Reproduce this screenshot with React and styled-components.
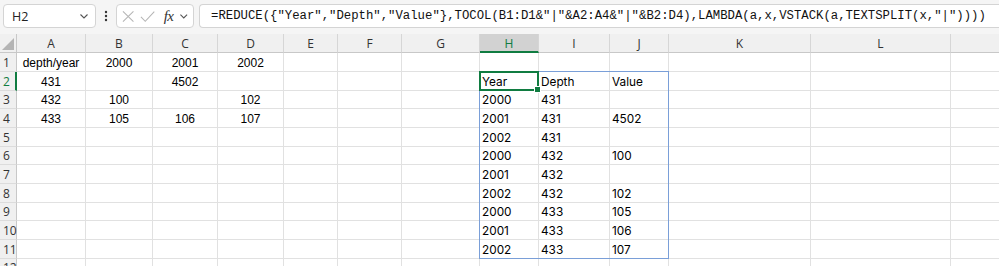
import React from "react";
import styled, { createGlobalStyle } from "styled-components";

const GlobalStyle = createGlobalStyle`
  * { box-sizing: border-box; }
  body {
    margin: 0;
    background: #ffffff;
    font-family: "Liberation Sans", Arial, sans-serif;
    overflow: hidden;
  }
`;

// last column is only partly in view, its letter falls outside the window
const COLS = [
  { id: "", w: 17 },
  { id: "A", w: 69 },
  { id: "B", w: 67 },
  { id: "C", w: 65 },
  { id: "D", w: 66 },
  { id: "E", w: 54 },
  { id: "F", w: 64 },
  { id: "G", w: 78 },
  { id: "H", w: 59 },
  { id: "I", w: 71 },
  { id: "J", w: 59 },
  { id: "K", w: 142 },
  { id: "L", w: 140 },
  { id: "M", w: 130, hidden: true },
];

const ROW_H = 18.67;
const HEAD_H = 19.33;

const source = {
  1: ["depth/year", "2000", "2001", "2002"],
  2: ["431", "", "4502", ""],
  3: ["432", "100", "", "102"],
  4: ["433", "105", "106", "107"],
};

const spill = [
  ["Year", "Depth", "Value"],
  ["2000", "431", ""],
  ["2001", "431", "4502"],
  ["2002", "431", ""],
  ["2000", "432", "100"],
  ["2001", "432", ""],
  ["2002", "432", "102"],
  ["2000", "433", "105"],
  ["2001", "433", "106"],
  ["2002", "433", "107"],
];

const Window = styled.div`
  width: 999px;
  height: 266px;
  display: flex;
  flex-direction: column;
  overflow: hidden;
`;

const Toolbar = styled.div`
  height: 34px;
  flex-shrink: 0;
  background: #f5f5f5;
  display: flex;
  align-items: flex-start;
  padding: 4px 0 0 3px;
`;

const Box = styled.div`
  height: 24px;
  background: #ffffff;
  border: 1px solid #d4d4d4;
  border-radius: 4px;
  display: flex;
  align-items: center;
`;

const NameBox = styled(Box)`
  width: 93px;
  padding: 0 6px 0 8px;
  justify-content: space-between;
  font-family: "Open Sans", "Liberation Sans", sans-serif;
  font-size: 12.5px;
  color: #222;
`;

const Dots = styled.div`
  width: 20px;
  height: 24px;
  display: flex;
  align-items: center;
  justify-content: center;
`;

const FxBox = styled(Box)`
  width: 78px;
  padding: 0 4px 0 5px;
  gap: 6px;
`;

const FxLabel = styled.span`
  font-family: "Liberation Serif", "Times New Roman", serif;
  font-style: italic;
  font-size: 15px;
  color: #333;
  margin-left: 2px;
  letter-spacing: -0.5px;
`;

const FormulaBox = styled(Box)`
  flex: 1;
  margin-left: 5px;
  border-right: none;
  border-radius: 4px 0 0 4px;
  padding-left: 11px;
  font-family: "Liberation Mono", "DejaVu Sans Mono", monospace;
  font-size: 12.3px;
  color: #111;
  white-space: nowrap;
  overflow: hidden;
`;

const Sheet = styled.div`
  position: relative;
  display: grid;
  grid-template-columns: ${COLS.map((c) => c.w + "px").join(" ")};
  grid-template-rows: ${HEAD_H}px;
  grid-auto-rows: ${ROW_H}px;
  flex: 1;
`;

const ColHead = styled.div`
  background: ${(p) => (p.$active ? "#d2d2d2" : "#f0f0f0")};
  border-right: 1px solid #d6d6d6;
  border-bottom: ${(p) => (p.$active ? "2px solid #107c41" : "1px solid #c8c8c8")};
  color: ${(p) => (p.$active ? "#107c41" : "#333")};
  font-family: "Open Sans", "Liberation Sans", sans-serif;
  font-size: 12px;
  display: flex;
  align-items: center;
  justify-content: center;
  padding-top: 1px;
`;

const Corner = styled.div`
  background: #f0f0f0;
  border-right: 1px solid #c8c8c8;
  border-bottom: 1px solid #c8c8c8;
  display: flex;
  align-items: flex-end;
  justify-content: flex-end;
  padding: 0 2px 2px 0;
`;

const RowHead = styled.div`
  background: #f0f0f0;
  border-right: ${(p) => (p.$active ? "2px solid #107c41" : "1px solid #c8c8c8")};
  border-bottom: 1px solid #dcdcdc;
  color: ${(p) => (p.$active ? "#107c41" : "#333")};
  font-family: "Open Sans", "Liberation Sans", sans-serif;
  font-size: 12px;
  display: flex;
  align-items: center;
  padding: 1px 0 0 3px;
`;

const Cell = styled.div`
  border-right: 1px solid #e1e1e1;
  border-bottom: 1px solid #e1e1e1;
  display: flex;
  align-items: center;
  justify-content: ${(p) => (p.$center ? "center" : "flex-start")};
  padding: 2px 2px 0 2px;
  font-family: ${(p) =>
    p.$modern ? '"Inter", "Noto Sans", sans-serif' : '"Liberation Sans", Arial, sans-serif'};
  font-size: ${(p) => (p.$modern ? "11.8px" : "12px")};
  color: #000;
  white-space: nowrap;
  overflow: hidden;
`;

const Range = styled.div`
  position: absolute;
  border: 1px solid #7a9fd8;
  pointer-events: none;
`;

const Selected = styled.div`
  position: absolute;
  border: 2px solid #107c41;
  pointer-events: none;
  &::after {
    content: "";
    position: absolute;
    right: -4px;
    bottom: -4px;
    width: 5px;
    height: 5px;
    background: #107c41;
    border: 1px solid #fff;
  }
`;

const Chevron = () => (
  <svg width="10" height="10" viewBox="0 0 10 10">
    <path d="M1.5 3.5 L5 7 L8.5 3.5" fill="none" stroke="#555" strokeWidth="1.1" />
  </svg>
);

const VDots = () => (
  <svg width="4" height="12" viewBox="0 0 4 12">
    <circle cx="2" cy="2" r="1.2" fill="#333" />
    <circle cx="2" cy="6" r="1.2" fill="#333" />
    <circle cx="2" cy="10" r="1.2" fill="#333" />
  </svg>
);

const Cross = () => (
  <svg width="13" height="13" viewBox="0 0 13 13">
    <path d="M1 1 L12 12 M12 1 L1 12" stroke="#b5b5b5" strokeWidth="1.1" fill="none" />
  </svg>
);

const Check = () => (
  <svg width="16" height="13" viewBox="0 0 16 13">
    <path d="M1 7 L5.5 11.5 L15 1.5" stroke="#b5b5b5" strokeWidth="1.1" fill="none" />
  </svg>
);

const CornerMark = () => (
  <svg width="12" height="12" viewBox="0 0 12 12">
    <path d="M12 0 L12 12 L0 12 Z" fill="#b4b4b4" />
  </svg>
);

const colX = (i) => COLS.slice(0, i).reduce((s, c) => s + c.w, 0);
const rowY = (r) => HEAD_H + (r - 1) * ROW_H;

export default function App() {
  const rows = Array.from({ length: 12 }, (_, i) => i + 1);
  const hIdx = COLS.findIndex((c) => c.id === "H");
  const jIdx = COLS.findIndex((c) => c.id === "J");

  return (
    <Window>
      <GlobalStyle />
      <Toolbar>
        <NameBox>
          <span>H2</span>
          <Chevron />
        </NameBox>
        <Dots>
          <VDots />
        </Dots>
        <FxBox>
          <Cross />
          <Check />
          <FxLabel>fx</FxLabel>
          <Chevron />
        </FxBox>
        <FormulaBox>
          {'=REDUCE({"Year","Depth","Value"},TOCOL(B1:D1&"|"&A2:A4&"|"&B2:D4),LAMBDA(a,x,VSTACK(a,TEXTSPLIT(x,"|"))))'}
        </FormulaBox>
      </Toolbar>
      <Sheet>
        {COLS.map((c, i) =>
          i === 0 ? (
            <Corner key="corner">
              <CornerMark />
            </Corner>
          ) : (
            <ColHead key={c.id} $active={c.id === "H"}>
              {c.hidden ? "" : c.id}
            </ColHead>
          )
        )}
        {rows.map((r) =>
          COLS.map((c, i) => {
            if (i === 0)
              return (
                <RowHead key={`r${r}`} $active={r === 2}>
                  {r}
                </RowHead>
              );
            let text = "";
            let center = false;
            let modern = false;
            if (i >= 1 && i <= 4 && source[r]) {
              text = source[r][i - 1];
              center = true;
            }
            if (i >= hIdx && i <= jIdx && r >= 2 && r <= 11) {
              text = spill[r - 2][i - hIdx];
              modern = true;
            }
            return (
              <Cell key={`${c.id}${r}`} $center={center} $modern={modern}>
                {text}
              </Cell>
            );
          })
        )}
        <Range
          style={{
            left: colX(hIdx) - 1,
            top: rowY(2) - 1,
            width: colX(jIdx + 1) - colX(hIdx) + 1,
            height: rowY(12) - rowY(2) + 1,
          }}
        />
        <Selected
          style={{
            left: colX(hIdx) - 1,
            top: rowY(2) - 1,
            width: COLS[hIdx].w + 1,
            height: ROW_H + 1,
          }}
        />
      </Sheet>
    </Window>
  );
}
